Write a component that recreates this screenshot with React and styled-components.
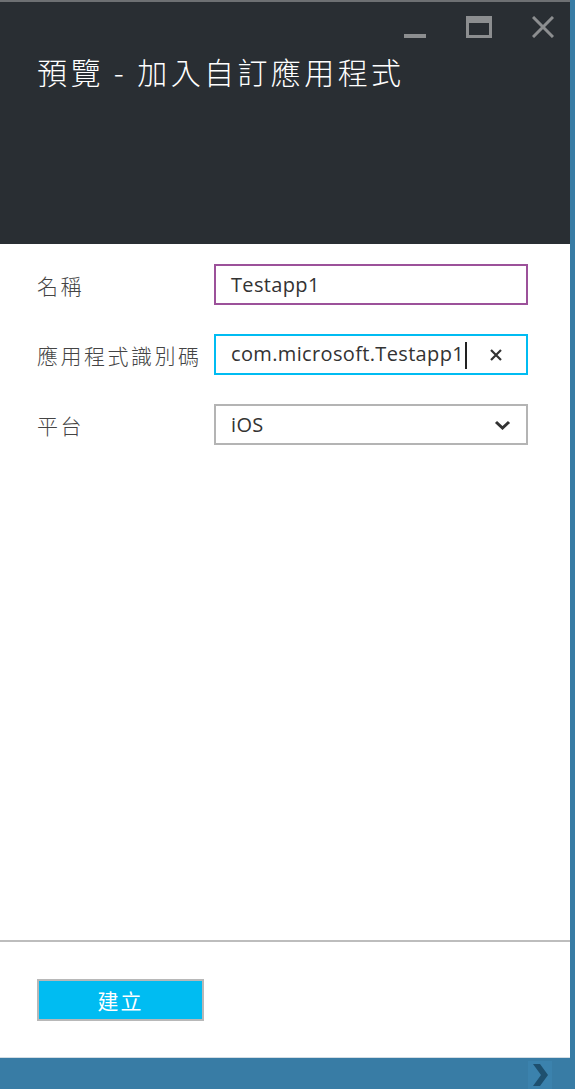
import React from 'react';
import styled, { createGlobalStyle } from 'styled-components';

const GlobalStyle = createGlobalStyle`
  html, body {
    margin: 0;
    padding: 0;
    background: #387ca5;
  }
  * {
    box-sizing: border-box;
  }
`;

const cjk = `'Noto Sans CJK TC', 'Noto Sans', sans-serif`;
const latin = `'Open Sans', 'Noto Sans CJK TC', sans-serif`;

const Frame = styled.div`
  width: 575px;
  height: 1089px;
  display: flex;
  flex-direction: column;
  background: #387ca5;
`;

const Blade = styled.div`
  width: 570px;
  flex: 1;
  display: flex;
  flex-direction: column;
  background: #fff;
  border-bottom: 1px solid #d3dde4;
`;

const Header = styled.header`
  height: 244px;
  background: #292e33;
  border-top: 2px solid #6d7073;
  display: flex;
  flex-direction: column;
  padding: 14px 16px 0 37px;
`;

const Controls = styled.div`
  display: flex;
  justify-content: flex-end;
  align-items: flex-end;
  gap: 40px;
  height: 22px;
`;

const Title = styled.h1`
  margin: 15px 0 0;
  font-family: ${cjk};
  font-weight: 300;
  font-size: 30px;
  line-height: 36px;
  letter-spacing: 3.4px;
  color: #fff;
`;

const Body = styled.main`
  flex: 1;
  display: flex;
  flex-direction: column;
  gap: 29px;
  padding: 20px 0 0 37px;
`;

const Row = styled.div`
  display: flex;
  align-items: center;
  height: 41px;
`;

const Label = styled.label`
  width: 177px;
  font-family: ${cjk};
  font-weight: 300;
  font-size: 21px;
  letter-spacing: 2.5px;
  color: #444;
`;

const Field = styled.div`
  width: 314px;
  height: 41px;
  display: flex;
  align-items: center;
  padding: 0 ${(p) => p.$padRight}px 0 15px;
  border: 2px solid ${(p) => p.$border};
  font-family: ${latin};
  font-size: 20px;
  letter-spacing: 0.35px;
  color: #333;
`;

const Value = styled.span`
  flex: 1;
  white-space: nowrap;
`;

const Caret = styled.span`
  display: inline-block;
  width: 2px;
  height: 27px;
  margin-left: 1px;
  vertical-align: middle;
  background: #222;
`;

const Footer = styled.footer`
  height: 117px;
  border-top: 2px solid #bdbdbd;
  padding: 37px 0 0 37px;
`;

const CreateButton = styled.button`
  width: 167px;
  height: 42px;
  background: #00bcf2;
  border: 2px solid #b8b8b8;
  color: #fff;
  font-family: ${cjk};
  font-size: 21px;
  letter-spacing: 2px;
  padding: 0;
`;

const BottomBar = styled.div`
  height: 31px;
  display: flex;
  justify-content: flex-end;
  align-items: flex-end;
  padding-right: 23px;
`;

const NextTab = styled.div`
  width: 24px;
  height: 28px;
  display: flex;
  align-items: center;
  justify-content: center;
  background: #3b82ad;
`;

export default function App() {
  return (
    <Frame>
      <GlobalStyle />
      <Blade>
        <Header>
          <Controls>
            <svg width="22" height="22" viewBox="0 0 22 22">
              <rect x="0" y="18" width="22" height="4" fill="#8c8e90" />
            </svg>
            <svg width="26" height="22" viewBox="0 0 26 22">
              <rect x="1.5" y="1.5" width="23" height="19" fill="none" stroke="#8c8e90" strokeWidth="3" />
              <rect x="1" y="1" width="24" height="6" fill="#8c8e90" />
            </svg>
            <svg width="22" height="22" viewBox="0 0 22 22">
              <path d="M1 1 L21 21 M21 1 L1 21" stroke="#8c8e90" strokeWidth="3" />
            </svg>
          </Controls>
          <Title>預覽 - 加入自訂應用程式</Title>
        </Header>
        <Body>
          <Row>
            <Label>名稱</Label>
            <Field $border="#9c519a" $padRight={15}>
              <Value>Testapp1</Value>
            </Field>
          </Row>
          <Row>
            <Label>應用程式識別碼</Label>
            <Field $border="#00bcf2" $padRight={24}>
              <Value>
                com.microsoft.Testapp1
                <Caret />
              </Value>
              <svg width="12" height="12" viewBox="0 0 12 12">
                <path d="M1 1 L11 11 M11 1 L1 11" stroke="#333" strokeWidth="2.2" />
              </svg>
            </Field>
          </Row>
          <Row>
            <Label>平台</Label>
            <Field $border="#b4b4b4" $padRight={15}>
              <Value>iOS</Value>
              <svg width="17" height="10" viewBox="0 0 17 10">
                <path d="M2 2 L8.5 8 L15 2" fill="none" stroke="#333" strokeWidth="3" />
              </svg>
            </Field>
          </Row>
        </Body>
        <Footer>
          <CreateButton>建立</CreateButton>
        </Footer>
      </Blade>
      <BottomBar>
        <NextTab>
          <svg width="17" height="22" viewBox="0 0 17 22">
            <path d="M1 0 L8 0 L16 11 L8 22 L1 22 L9 11 Z" fill="#1e506f" />
          </svg>
        </NextTab>
      </BottomBar>
    </Frame>
  );
}
